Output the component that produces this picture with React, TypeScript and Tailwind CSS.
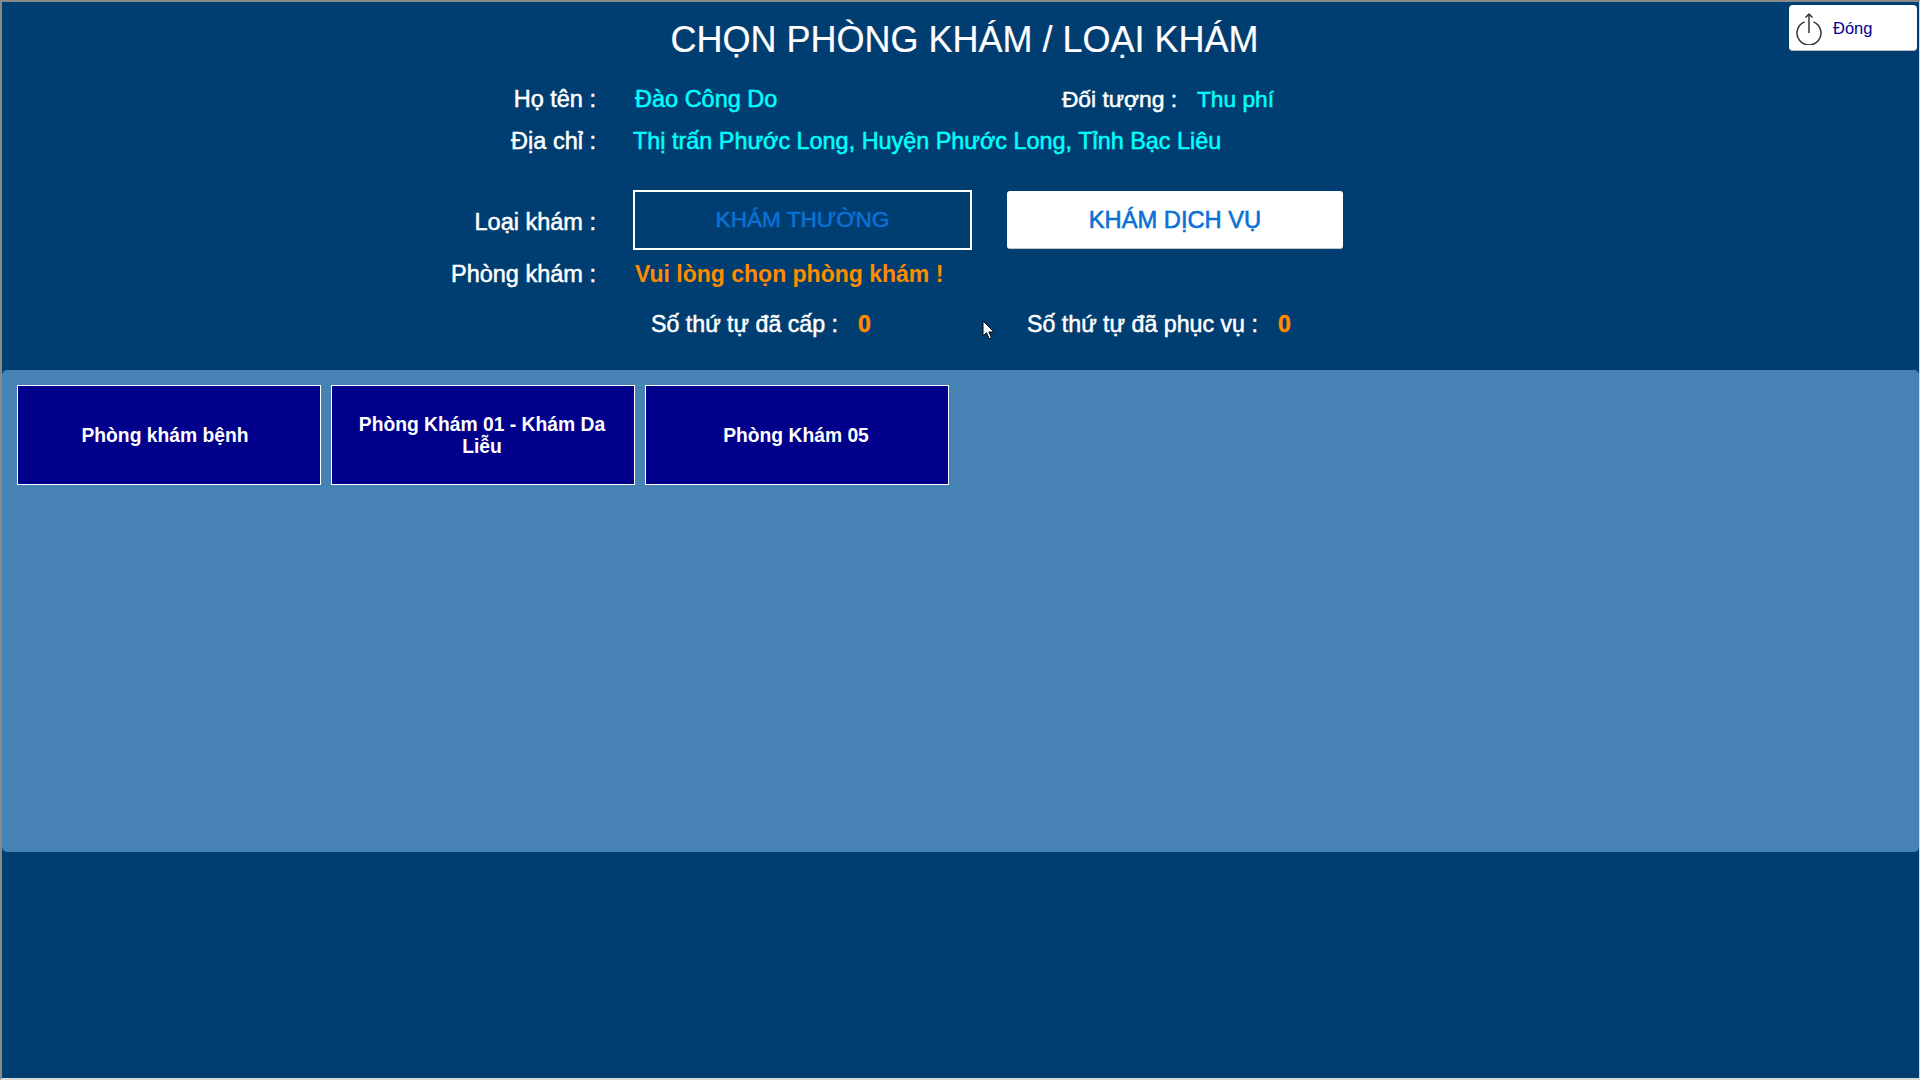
import React from "react";

const rooms = ["Phòng khám bệnh", "Phòng Khám 01 - Khám Da Liễu", "Phòng Khám 05"];

const App = () => {
	return (
		<div className="relative h-screen overflow-hidden bg-[#003d70] border-t-2 border-l-2 border-r border-b-2 border-t-[#8a8a8a] border-l-[#8a8a8a] border-r-[#d8d8d8] border-b-[#d8d8d8] font-['Liberation_Sans',Arial,sans-serif]">
			<div className="h-[368px] text-[23.5px] leading-[26px] text-white [-webkit-text-stroke:0.5px_currentColor] whitespace-nowrap">
				<h1 className="pt-[17px] h-[60px] text-center text-[36px] leading-[41px] [-webkit-text-stroke:0.2px_currentColor] ml-[8px]">
					CHỌN PHÒNG KHÁM / LOẠI KHÁM
				</h1>

				<div className="flex items-baseline mt-[24px]">
					<div className="w-[594px] text-right">Họ tên :</div>
					<div className="ml-[39px] w-[426px] text-[#00ffff]">Đào Công Do</div>
					<div className="w-[116px] flex justify-end text-[22.8px]">Đối tượng :</div>
					<div className="ml-[20px] text-[22.7px] text-[#00ffff]">Thu phí</div>
				</div>

				<div className="flex mt-[16px]">
					<div className="w-[594px] text-right">Địa chỉ :</div>
					<div className="ml-[37px] text-[23.4px] text-[#00ffff]">Thị trấn Phước Long, Huyện Phước Long, Tỉnh Bạc Liêu</div>
				</div>

				<div className="flex items-center mt-[36px]">
					<div className="w-[594px] text-right pt-[3px]">Loại khám :</div>
					<button className="ml-[37px] w-[339px] h-[60px] border-2 border-white text-[#0a71d3] text-[22.6px] [-webkit-text-stroke:0.6px_#0a71d3]">
						KHÁM THƯỜNG
					</button>
					<button className="ml-[35px] w-[336px] h-[58px] rounded-[3px] bg-white border-b border-[#c4c4c4] text-[#0a71d3] text-[23.7px] [-webkit-text-stroke:0.6px_#0a71d3]">
						KHÁM DỊCH VỤ
					</button>
				</div>

				<div className="flex mt-[11px]">
					<div className="w-[594px] text-right">Phòng khám :</div>
					<div className="ml-[39px] font-bold text-[23px] text-[#ff8c00] [-webkit-text-stroke:0]">Vui lòng chọn phòng khám !</div>
				</div>

				<div className="flex mt-[24px] text-[23.2px]">
					<div className="ml-[649px] w-[189px]">Số thứ tự đã cấp :</div>
					<div className="ml-[18px] w-[169px] font-bold text-[23px] text-[#ff8c00]">0</div>
					<div className="w-[233px]">Số thứ tự đã phục vụ :</div>
					<div className="ml-[18px] font-bold text-[23px] text-[#ff8c00]">0</div>
				</div>
			</div>

			<div className="h-[482px] rounded-[5px] bg-[#4682b4] pt-[15px] pl-[15px] flex gap-[10px] items-start">
				{rooms.map((room, i) => (
					<div
						key={room}
						className={`flex items-center justify-center w-[304px] h-[100px] border border-white bg-[#00008b] pt-[2px] pl-[20px] text-center text-[19.3px] leading-[22px] font-bold text-white ${i === 0 ? "pr-[28px]" : "pr-[22px]"}`}>
						{room}
					</div>
				))}
			</div>

			{/* nut dong */}
			<div className="absolute top-[3px] right-[2px] flex items-center w-[128px] h-[46px] rounded-[4px] bg-white border-b border-[#bbbbbb] pl-[6px] text-[16.5px] text-[#00008b]">
				<svg width="28" height="34" viewBox="0 0 28 34" fill="none" stroke="#333333" strokeWidth="1.5">
					<path d="M9.5 10.9A12 12 0 1 0 18.5 10.9" />
					<path d="M14 3v19" />
					<path d="M10.5 6.5L14 3l3.5 3.5" />
				</svg>
				<span className="ml-[10px] pt-[2px]">Đóng</span>
			</div>

			{/* con tro chuot */}
			<svg className="absolute left-[980px] top-[318px]" width="14" height="20" viewBox="0 0 14 20">
				<path d="M1 1v15l3.5-3.2 2.6 6 2.4-1-2.6-5.8H12z" fill="#ffffff" stroke="#000000" strokeWidth="1" />
			</svg>
		</div>
	);
};

export default App;
